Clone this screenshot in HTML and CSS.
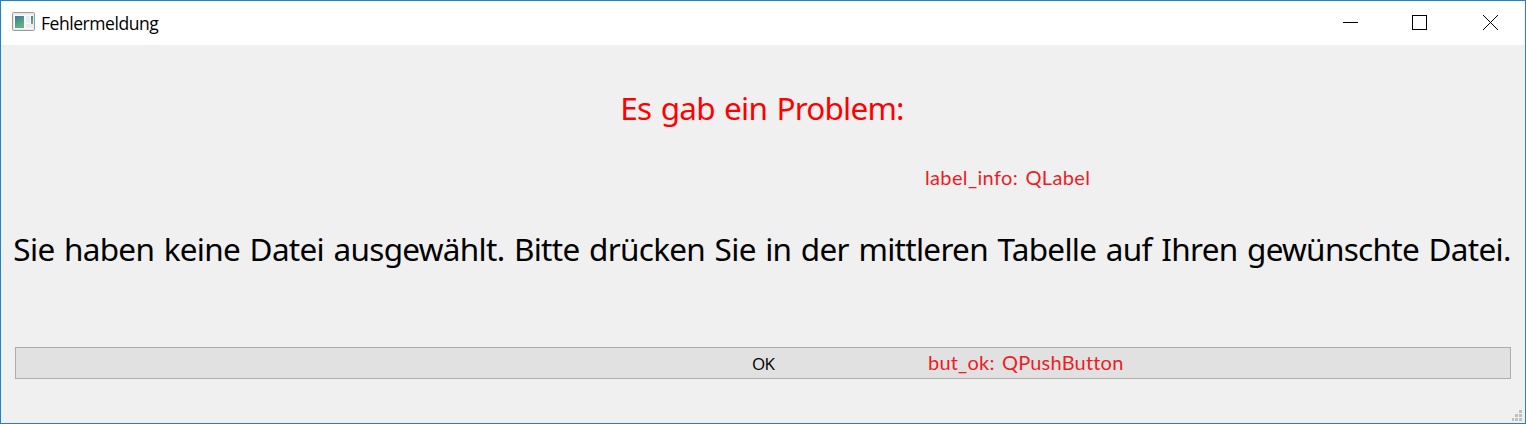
FILE: index.html
```html
<!DOCTYPE html>
<html lang="de">
<head>
<meta charset="utf-8">
<title>Fehlermeldung</title>
<link rel="stylesheet" href="styles.css">
</head>
<body>
<div class="window">
  <header class="titlebar">
    <svg class="app-icon" width="23" height="19" viewBox="0 0 23 19">
      <defs>
        <linearGradient id="pane" x1="0" y1="0" x2="0.4" y2="1">
          <stop offset="0" stop-color="#3f78a0"/>
          <stop offset="1" stop-color="#62b27c"/>
        </linearGradient>
      </defs>
      <rect x="0.5" y="0.5" width="22" height="18" rx="1" fill="#e9e9eb" stroke="#989ca0"/>
      <rect x="2" y="3" width="19" height="14" fill="#fafafa"/>
      <rect x="3" y="4" width="9" height="12" fill="url(#pane)"/>
      <rect x="14" y="4" width="4" height="7" fill="#ececec"/>
      <rect x="14" y="12" width="7" height="4" fill="#ececec"/>
      <rect x="19" y="4" width="2" height="8" fill="url(#pane)"/>
    </svg>
    <span class="title">Fehlermeldung</span>
    <div class="controls">
      <svg width="15" height="15" viewBox="0 0 15 15"><path d="M0 7.5H15" stroke="#000"/></svg>
      <svg width="15" height="15" viewBox="0 0 15 15"><rect x="0.5" y="0.5" width="14" height="14" fill="none" stroke="#000"/></svg>
      <svg class="close" width="15" height="15" viewBox="0 0 15 15"><path d="M0 0L15 15M15 0L0 15" stroke="#000"/></svg>
    </div>
  </header>
  <main class="content">
    <h1 class="heading"><span>Es gab ein Problem:</span></h1>
    <div class="note note-label"><span>label_info: QLabel</span></div>
    <p class="message"><span>Sie haben keine Datei ausgewählt. Bitte drücken Sie in der mittleren Tabelle auf Ihren gewünschte Datei.</span></p>
    <div class="button-row">
      <button class="ok" type="button"><span>OK</span></button>
      <div class="note note-button"><span>but_ok: QPushButton</span></div>
    </div>
  </main>
  <svg class="grip" width="10" height="11" viewBox="0 0 10 11" fill="#bfbfbf">
    <path d="M7 0h3v3h-3zM3 4h3v3h-3zM7 4h3v3h-3zM0 8h2v3h-2zM3 8h3v3h-3zM7 8h3v3h-3z"/>
  </svg>
</div>
</body>
</html>
```
FILE: styles.css
```css
* { box-sizing: border-box; }
body { margin: 0; }
.window {
  position: relative;
  width: 1526px;
  height: 424px;
  border: 1px solid #1e82d2;
  background: #f0f0f0;
  color: #000;
  font-family: "Noto Sans", sans-serif;
}
.titlebar {
  display: flex;
  align-items: center;
  height: 44px;
  padding: 0 27px 0 11px;
  background: #fff;
}
.app-icon { margin: 0 6px 3px 0; }
.title { font: 17.5px/24px "Open Sans", sans-serif; letter-spacing: -0.45px; }
.controls { display: flex; gap: 54px; margin: 0 0 1px auto; }
.controls svg { display: block; }
.controls .close { margin-left: 2px; }
.content {
  display: flex;
  flex-direction: column;
  padding: 41px 14px 0;
}
.heading, .message {
  display: flex;
  justify-content: center;
  margin: 0;
  padding-right: 2px;
  font-size: 31.5px;
  font-weight: 400;
  line-height: 44px;
  word-spacing: 2px;
  white-space: nowrap;
}
.heading { letter-spacing: -0.8px; color: #f00; }
.message { margin-top: 38px; letter-spacing: -0.7px; }
.note {
  color: #ed1c24;
  font: 20px/24px Lato, sans-serif;
  letter-spacing: 0.35px;
  word-spacing: 2px;
  white-space: nowrap;
}
.note-label { margin: 35px 0 0 910px; }
.button-row { position: relative; margin-top: 76px; }
.ok {
  display: block;
  width: 1496px;
  height: 32px;
  padding: 2px 0 0;
  border: 1px solid #adadad;
  background: #e1e1e1;
  color: #000;
  font: 17px/24px "Open Sans", sans-serif;
  letter-spacing: -0.8px;
}
.note-button { position: absolute; left: 913px; top: 3px; letter-spacing: 0.2px; }
.grip { position: absolute; right: 3px; bottom: 2px; }
```
